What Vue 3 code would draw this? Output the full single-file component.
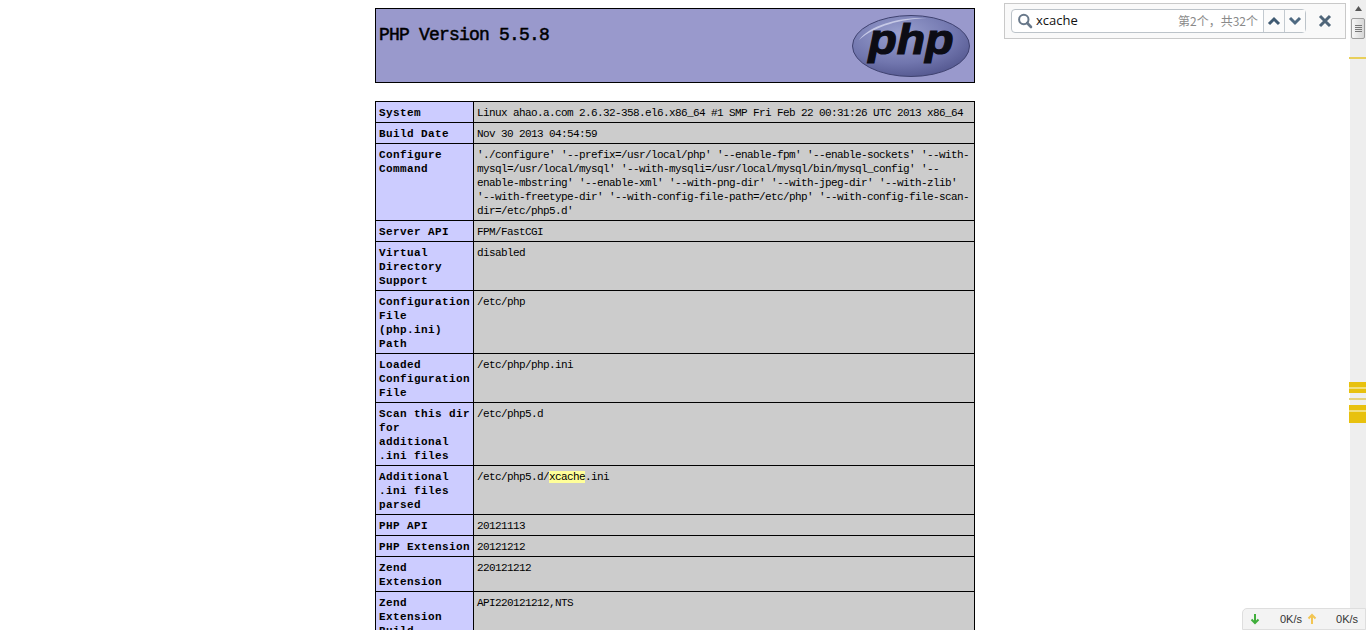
<script setup>
const rows = [
  { k: 'System', v: ['Linux ahao.a.com 2.6.32-358.el6.x86_64 #1 SMP Fri Feb 22 00:31:26 UTC 2013 x86_64'] },
  { k: 'Build Date', v: ['Nov 30 2013 04:54:59'] },
  { k: 'Configure Command', v: [
    "'./configure' '--prefix=/usr/local/php' '--enable-fpm' '--enable-sockets' '--with-",
    "mysql=/usr/local/mysql' '--with-mysqli=/usr/local/mysql/bin/mysql_config' '--",
    "enable-mbstring' '--enable-xml' '--with-png-dir' '--with-jpeg-dir' '--with-zlib'",
    "'--with-freetype-dir' '--with-config-file-path=/etc/php' '--with-config-file-scan-",
    "dir=/etc/php5.d'"
  ] },
  { k: 'Server API', v: ['FPM/FastCGI'] },
  { k: 'Virtual Directory Support', v: ['disabled'] },
  { k: 'Configuration File (php.ini) Path', v: ['/etc/php'] },
  { k: 'Loaded Configuration File', v: ['/etc/php/php.ini'] },
  { k: 'Scan this dir for additional .ini files', v: ['/etc/php5.d'] },
  { k: 'Additional .ini files parsed', hit: true },
  { k: 'PHP API', v: ['20121113'] },
  { k: 'PHP Extension', v: ['20121212'] },
  { k: 'Zend Extension', v: ['220121212'] },
  { k: 'Zend Extension Build', v: ['API220121212,NTS'] }
]
const marks = [
  { top: 57, h: 2, c: '#e8cf5a' },
  { top: 382, h: 5, c: '#e8c10e' },
  { top: 387, h: 2, c: '#f1df80' },
  { top: 389, h: 4, c: '#e8c10e' },
  { top: 398, h: 2, c: '#e6d27c' },
  { top: 405, h: 5, c: '#e8c10e' },
  { top: 410, h: 2, c: '#f1df80' },
  { top: 412, h: 11, c: '#e8c10e' }
]
</script>

<template>
  <div class="screen">
    <main class="page">
      <div class="banner">
        <h1 class="title">PHP Version 5.5.8</h1>
        <svg class="logo" width="120" height="64" viewBox="0 0 120 64">
          <defs>
            <radialGradient id="oval" cx="0.4" cy="0.3" r="0.8">
              <stop offset="0" stop-color="#9aa0cf" />
              <stop offset="0.6" stop-color="#7176ae" />
              <stop offset="1" stop-color="#4d5088" />
            </radialGradient>
          </defs>
          <ellipse cx="60" cy="32" rx="58.5" ry="30.5" fill="url(#oval)" stroke="#3f4270" stroke-width="1" />
          <path d="M8 26 C20 10 50 3 76 4 C50 5 24 12 8 26 Z" fill="#c6c9e6" />
          <text x="60" y="40" text-anchor="middle" class="logo-text" textLength="85" lengthAdjust="spacingAndGlyphs">php</text>
        </svg>
      </div>
      <table class="info">
        <tbody>
          <tr v-for="row in rows" :key="row.k">
            <td class="key">{{ row.k }}</td>
            <td class="val">
              <template v-if="row.hit">/etc/php5.d/<mark class="hit">xcache</mark>.ini</template>
              <div v-for="line in row.v" v-else :key="line" class="line">{{ line }}</div>
            </td>
          </tr>
        </tbody>
      </table>
    </main>

    <div class="findbar">
      <div class="field">
        <svg class="glass" width="16" height="16" viewBox="0 0 16 16">
          <circle cx="6.8" cy="6.5" r="4.7" fill="none" stroke="#68788a" stroke-width="2" />
          <path d="M10.2 10 L14 14" stroke="#68788a" stroke-width="2.6" stroke-linecap="round" />
        </svg>
        <span class="query">xcache</span>
        <span class="count">第2个，共32个</span>
        <button class="nav">
          <svg width="14" height="10" viewBox="0 0 14 10"><path d="M2 8 L7 3 L12 8" fill="none" stroke="#3f5a72" stroke-width="3" /></svg>
        </button>
        <button class="nav">
          <svg width="14" height="10" viewBox="0 0 14 10"><path d="M2 2 L7 7 L12 2" fill="none" stroke="#4f6a82" stroke-width="3" /></svg>
        </button>
      </div>
      <svg class="close" width="14" height="14" viewBox="0 0 14 14"><path d="M2 2 L12 12 M12 2 L2 12" stroke="#4f6579" stroke-width="3" /></svg>
    </div>

    <div class="scrollbar">
      <svg class="up" width="9" height="5" viewBox="0 0 9 5"><path d="M4.5 0 L8 5 L1 5 Z" fill="#555" /></svg>
      <div class="thumb"><i></i><i></i><i></i><i></i></div>
      <div v-for="m in marks" :key="m.top" class="mark" :style="{ top: m.top + 'px', height: m.h + 'px', background: m.c }"></div>
    </div>

    <div class="net">
      <svg class="arrow" width="10" height="12" viewBox="0 0 10 12"><path d="M5 1 V10 M1.5 6.5 L5 10 L8.5 6.5" fill="none" stroke="#3fae3a" stroke-width="2" /></svg>
      <span class="rate r1">0K/s</span>
      <svg class="arrow" width="10" height="12" viewBox="0 0 10 12"><path d="M5 11 V2 M1.5 5.5 L5 2 L8.5 5.5" fill="none" stroke="#f2c552" stroke-width="2" /></svg>
      <span class="rate r2">0K/s</span>
    </div>
  </div>
</template>

<style>
html, body { margin: 0; background: #fff; overflow: hidden; }
</style>

<style scoped>
.screen {
  position: relative;
  width: 1366px;
  height: 630px;
  overflow: hidden;
  background: #fff;
}
.page {
  width: 600px;
  margin-left: 375px;
  padding-top: 8px;
  font-family: "Liberation Mono", monospace;
  color: #000;
}
.banner {
  box-sizing: border-box;
  height: 75px;
  border: 1px solid #000;
  background: #9999cc;
  display: flex;
  justify-content: space-between;
  padding: 5px 3px 0 3px;
}
.title {
  margin: 9px 0 0;
  font-size: 18px;
  line-height: 24px;
  letter-spacing: -0.8px;
  font-weight: 400;
  -webkit-text-stroke: 0.5px #000;
}
.logo-text {
  font-family: "Liberation Sans", sans-serif;
  font-style: italic;
  font-weight: 700;
  font-size: 42px;
  fill: #0c0c14;
  stroke: #0c0c14;
  stroke-width: 1.2;
}
.info {
  margin-top: 18px;
  width: 600px;
  table-layout: fixed;
  border-collapse: collapse;
}
.info td {
  border: 1px solid #000;
  padding: 4px 3px 2px 3px;
  vertical-align: top;
  line-height: 14px;
}
.key {
  width: 91px;
  background: #ccccff;
  font-size: 11px;
  font-weight: 700;
  letter-spacing: 0.4px;
}
.val {
  background: #cccccc;
  font-size: 11px;
  letter-spacing: -0.6px;
  white-space: nowrap;
}
.hit {
  background: #ffff99;
  color: #000;
}
.findbar {
  position: absolute;
  left: 1004px;
  top: 3px;
  box-sizing: border-box;
  width: 342px;
  height: 36px;
  display: flex;
  align-items: center;
  padding: 0 13px 0 6px;
  justify-content: space-between;
  background: #f9f9f9;
  border: 1px solid #c9c9c9;
  font-family: "Open Sans", "Noto Sans CJK SC", sans-serif;
}
.field {
  box-sizing: border-box;
  width: 295px;
  height: 24px;
  display: flex;
  align-items: center;
  background: #fff;
  border: 1px solid #bcc3c9;
  border-radius: 4px;
}
.glass { margin-left: 5px; flex: none; }
.query { margin-left: 3px; padding-bottom: 2px; font-size: 13px; color: #111; flex: 1; }
.count { padding-bottom: 2px; font-size: 12px; color: #8a8a8a; margin-right: 5px; font-family: "Noto Sans CJK SC", sans-serif; }
.nav {
  width: 21px;
  height: 22px;
  padding: 0;
  border: 0;
  border-left: 1px solid #c3cad0;
  background: #fbfbfb;
  display: flex;
  align-items: center;
  justify-content: center;
}
.close { flex: none; }
.scrollbar {
  position: absolute;
  left: 1350px;
  top: 0;
  width: 16px;
  height: 630px;
  background: #eeeeee;
}
.up { position: absolute; left: 4px; top: 6px; }
.thumb {
  position: absolute;
  left: 1px;
  top: 18px;
  box-sizing: border-box;
  width: 14px;
  height: 21px;
  background: linear-gradient(90deg, #f6f6f6, #d6d6d6);
  border: 1px solid #9d9d9d;
  border-radius: 2px;
  display: flex;
  flex-direction: column;
  justify-content: center;
  align-items: center;
  gap: 1px;
}
.thumb i { width: 7px; height: 1px; background: #777; }
.mark { position: absolute; left: -1px; width: 17px; }
.net {
  position: absolute;
  left: 1242px;
  top: 608px;
  box-sizing: border-box;
  width: 124px;
  height: 22px;
  display: flex;
  align-items: center;
  padding-left: 7px;
  background: #f3f3f3;
  border: 1px solid #dedede;
  border-radius: 5px 0 0 0;
  font-family: "Liberation Sans", sans-serif;
  font-size: 11px;
  color: #333;
}
.arrow { flex: none; }
.rate { white-space: nowrap; }
.r1 { margin-left: 20px; margin-right: 5px; }
.r2 { margin-left: 19px; }
</style>
